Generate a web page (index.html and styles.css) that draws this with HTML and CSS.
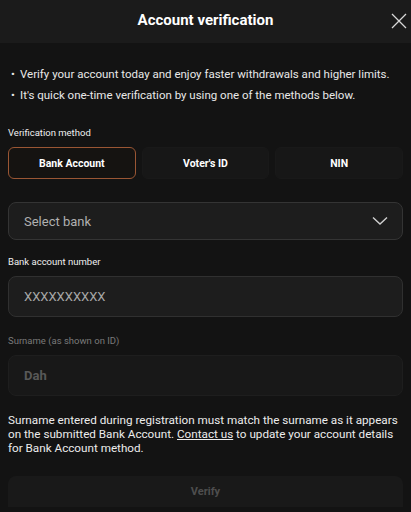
FILE: index.html
```html
<!DOCTYPE html>
<html lang="en">
<head>
  <meta charset="UTF-8">
  <meta name="viewport" content="width=device-width, initial-scale=1.0">
  <title>Account verification</title>
  <link rel="stylesheet" href="styles.css">
</head>
<body>
  <div class="modal">
    <div class="modal-header">
      <h1>Account verification</h1>
      <button class="close-button" aria-label="Close">
        <svg width="16" height="16" viewBox="0 0 16 16"><path d="M1 1L15 15M15 1L1 15" stroke="#d8d8d8" stroke-width="1.3" fill="none"/></svg>
      </button>
    </div>
    <div class="modal-body">
      <ul class="intro">
        <li>Verify your account today and enjoy faster withdrawals and higher limits.</li>
        <li>It's quick one-time verification by using one of the methods below.</li>
      </ul>

      <div class="field-label">Verification method</div>
      <div class="tabs">
        <button class="tab active">Bank Account</button>
        <button class="tab">Voter's ID</button>
        <button class="tab">NIN</button>
      </div>

      <div class="select-box">
        <span>Select bank</span>
        <svg width="16" height="10" viewBox="0 0 16 10"><path d="M1 1.5L8 8L15 1.5" stroke="#d0d0d0" stroke-width="1.4" fill="none"/></svg>
      </div>

      <label class="field-label" for="account-number">Bank account number</label>
      <input class="text-input" id="account-number" type="text" placeholder="XXXXXXXXXX">

      <label class="field-label muted" for="surname">Surname (as shown on ID)</label>
      <input class="text-input disabled" id="surname" type="text" value="Dah" disabled>

      <p class="note">Surname entered during registration must match the surname as it appears on the submitted Bank Account. <a href="#">Contact us</a> to update your account details for Bank Account method.</p>

      <button class="verify-button" disabled>Verify</button>
    </div>
  </div>
</body>
</html>
```

FILE: styles.css
```css
body {
  font-family: Roboto, "Noto Sans", sans-serif;
  background-color: #131313;
  color: #e8e8e8;
  margin: 0;
}
.modal {
  width: 411px;
  height: 512px;
  overflow: hidden;
}
.modal-header {
  height: 43px;
  background-color: #1b1b1b;
  display: flex;
  align-items: center;
  justify-content: center;
  position: relative;
}
.modal-header h1 {
  margin: 0 0 4px;
  font-size: 15px;
  font-weight: bold;
  color: #fff;
}
.close-button {
  position: absolute;
  right: 4px;
  top: 13px;
  background: none;
  border: none;
  padding: 0;
  cursor: pointer;
}
.modal-body {
  padding: 21px 8px 0 8px;
  display: flex;
  flex-direction: column;
}
.intro {
  margin: 0;
  padding: 0 0 0 3px;
  list-style: none;
  font-size: 11.5px;
  line-height: 21px;
}
.intro li::before {
  content: "\2022";
  display: inline-block;
  width: 9px;
}
.field-label {
  font-size: 9.5px;
  line-height: 11px;
  color: #f0f0f0;
  margin-bottom: 9px;
}
.intro + .field-label {
  margin-top: 21px;
}
.field-label.muted {
  color: #7a7a7a;
}
.tabs {
  display: grid;
  grid-template-columns: repeat(3, 1fr);
  gap: 6px;
  margin-bottom: 23px;
}
.tab {
  height: 32px;
  background-color: #171717;
  border: 1px solid #191919;
  border-radius: 6px;
  color: #fff;
  font-family: inherit;
  font-size: 10.5px;
  font-weight: bold;
}
.tab.active {
  background-color: #151311;
  border-color: #9a5634;
}
.select-box {
  height: 38px;
  flex-shrink: 0;
  box-sizing: border-box;
  background-color: #1d1d1d;
  border: 1px solid #343434;
  border-radius: 8px;
  display: flex;
  align-items: center;
  justify-content: space-between;
  padding: 0 14px 0 15px;
  font-size: 13px;
  color: #b0b0b0;
  margin-bottom: 16px;
}
.text-input {
  height: 41px;
  flex-shrink: 0;
  box-sizing: border-box;
  background-color: #1d1d1d;
  border: 1px solid #303030;
  border-radius: 8px;
  padding: 0 15px;
  font-family: inherit;
  font-size: 13px;
  color: #ddd;
  margin-bottom: 18px;
}
.text-input::placeholder {
  color: #a8a8a8;
}
.text-input.disabled {
  background-color: #181818;
  border-color: #1e1e1e;
  color: #585858;
  font-weight: bold;
  margin-bottom: 17px;
}
.note {
  margin: 0 0 21px;
  font-size: 11.7px;
  line-height: 14px;
  color: #ececec;
}
.note a {
  color: #ececec;
}
.verify-button {
  height: 31px;
  flex-shrink: 0;
  background-color: #191919;
  border: none;
  border-radius: 8px 8px 0 0;
  color: #4e4e4e;
  font-family: inherit;
  font-size: 11px;
  font-weight: bold;
}
```
